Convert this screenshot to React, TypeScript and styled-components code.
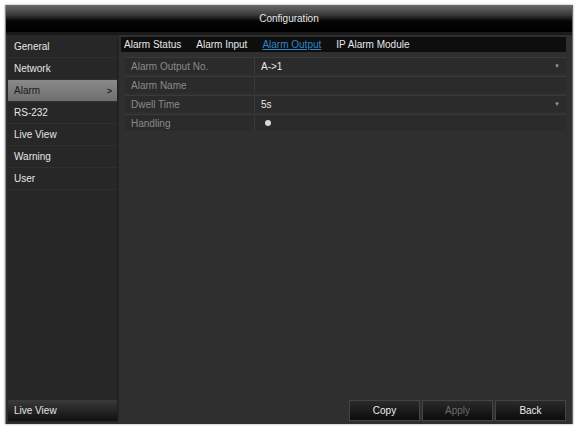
import React from 'react';
import styled, { createGlobalStyle } from 'styled-components';

const GlobalStyle = createGlobalStyle`
  html, body {
    margin: 0;
    padding: 0;
    background: #ffffff;
  }
  body {
    font-family: "Liberation Sans", Arial, sans-serif;
  }
`;

const Page = styled.div`
  width: 576px;
  height: 429px;
  padding: 5px;
  box-sizing: border-box;
`;

const Window = styled.div`
  width: 566px;
  height: 419px;
  display: flex;
  flex-direction: column;
  background: #2f2f2f;
  border-left: 1px solid #8a8a8a;
  border-right: 1px solid #6a6a6a;
  box-shadow: 0 0 2px rgba(0, 0, 0, 0.4);
`;

const TitleBar = styled.div`
  height: 27px;
  display: flex;
  align-items: center;
  justify-content: center;
  background: linear-gradient(#6a6a6a 0%, #3c3c3c 35%, #050505 60%, #000 100%);
  color: #e8e8e8;
  font-size: 10px;
  border-bottom: 3px solid #1a1a1a;
`;

const Body = styled.div`
  flex: 1;
  display: flex;
  gap: 4px;
  padding: 1px 6px 2px 2px;
  min-height: 0;
`;

const Sidebar = styled.div`
  width: 109px;
  display: flex;
  flex-direction: column;
  background: #272727;
  box-shadow: 1px 0 2px rgba(0, 0, 0, 0.5);
`;

const MenuItem = styled.div<{ $active?: boolean }>`
  height: 22px;
  display: flex;
  align-items: center;
  justify-content: space-between;
  padding: 0 5px 0 6px;
  font-size: 10px;
  color: ${p => (p.$active ? '#1a1a1a' : '#e6e6e6')};
  background: ${p => (p.$active ? 'linear-gradient(#8a8a8a, #6e6e6e)' : 'transparent')};
  border-bottom: 1px solid #2f2f2f;
  box-sizing: border-box;
`;

const Chevron = styled.span`
  font-size: 9px;
  font-weight: bold;
  color: #222;
`;

const Spacer = styled.div`
  flex: 1;
`;

const SideFooter = styled.div`
  height: 21px;
  display: flex;
  align-items: center;
  padding: 0 6px;
  font-size: 10px;
  color: #e6e6e6;
  background: linear-gradient(#3a3a3a, #101010);
  margin-bottom: 1px;
`;

const Main = styled.div`
  flex: 1;
  display: flex;
  flex-direction: column;
  padding-top: 1px;
`;

const Tabs = styled.div`
  height: 15px;
  display: flex;
  align-items: center;
  gap: 15px;
  padding: 0 3px;
  background: #0e0e0e;
`;

const Tab = styled.span<{ $active?: boolean }>`
  font-size: 10px;
  color: ${p => (p.$active ? '#2f86c9' : '#e8e8e8')};
  text-decoration: ${p => (p.$active ? 'underline' : 'none')};
`;

const Table = styled.div`
  display: flex;
  flex-direction: column;
  gap: 2px;
  padding: 5px 0 0 4px;
`;

const Row = styled.div`
  height: 17px;
  display: grid;
  grid-template-columns: 130px 1fr;
  background: #2b2b2b;
  border-top: 1px solid #3a3a3a;
  box-sizing: border-box;
`;

const Label = styled.div`
  display: flex;
  align-items: center;
  padding-left: 6px;
  font-size: 10px;
  color: #8a8a8a;
  border-right: 1px solid #3a3a3a;
`;

const Value = styled.div`
  display: flex;
  align-items: center;
  justify-content: space-between;
  padding: 0 6px;
  font-size: 10px;
  color: #e8e8e8;
`;

const Arrow = styled.span`
  font-size: 6px;
  color: #9a9a9a;
`;

const Dot = styled.span`
  width: 6px;
  height: 6px;
  margin-left: 4px;
  border-radius: 50%;
  background: #d8d8d8;
`;

const Buttons = styled.div`
  display: flex;
  justify-content: flex-end;
  gap: 2px;
  margin-top: auto;
  margin-bottom: 1px;
`;

const Button = styled.div<{ $disabled?: boolean }>`
  width: 71px;
  height: 21px;
  display: flex;
  align-items: center;
  justify-content: center;
  font-size: 10px;
  color: ${p => (p.$disabled ? '#6a6a6a' : '#ececec')};
  background: linear-gradient(#2a2a2a, #0c0c0c);
  border: 1px solid #444;
  box-sizing: border-box;
`;

const menu = ['General', 'Network', 'Alarm', 'RS-232', 'Live View', 'Warning', 'User'];

const rows: { label: string; value: React.ReactNode; select?: boolean }[] = [
  { label: 'Alarm Output No.', value: 'A->1', select: true },
  { label: 'Alarm Name', value: '' },
  { label: 'Dwell Time', value: '5s', select: true },
  { label: 'Handling', value: <Dot /> },
];

export default function App() {
  return (
    <>
      <GlobalStyle />
      <Page>
        <Window>
          <TitleBar>Configuration</TitleBar>
          <Body>
            <Sidebar>
              {menu.map(item => (
                <MenuItem key={item} $active={item === 'Alarm'}>
                  {item}
                  {item === 'Alarm' && <Chevron>&gt;</Chevron>}
                </MenuItem>
              ))}
              <Spacer />
              <SideFooter>Live View</SideFooter>
            </Sidebar>
            <Main>
              <Tabs>
                <Tab>Alarm Status</Tab>
                <Tab>Alarm Input</Tab>
                <Tab $active>Alarm Output</Tab>
                <Tab>IP Alarm Module</Tab>
              </Tabs>
              <Table>
                {rows.map(r => (
                  <Row key={r.label}>
                    <Label>{r.label}</Label>
                    <Value>
                      {r.value}
                      {r.select && <Arrow>▼</Arrow>}
                    </Value>
                  </Row>
                ))}
              </Table>
              <Buttons>
                <Button>Copy</Button>
                <Button $disabled>Apply</Button>
                <Button>Back</Button>
              </Buttons>
            </Main>
          </Body>
        </Window>
      </Page>
    </>
  );
}
